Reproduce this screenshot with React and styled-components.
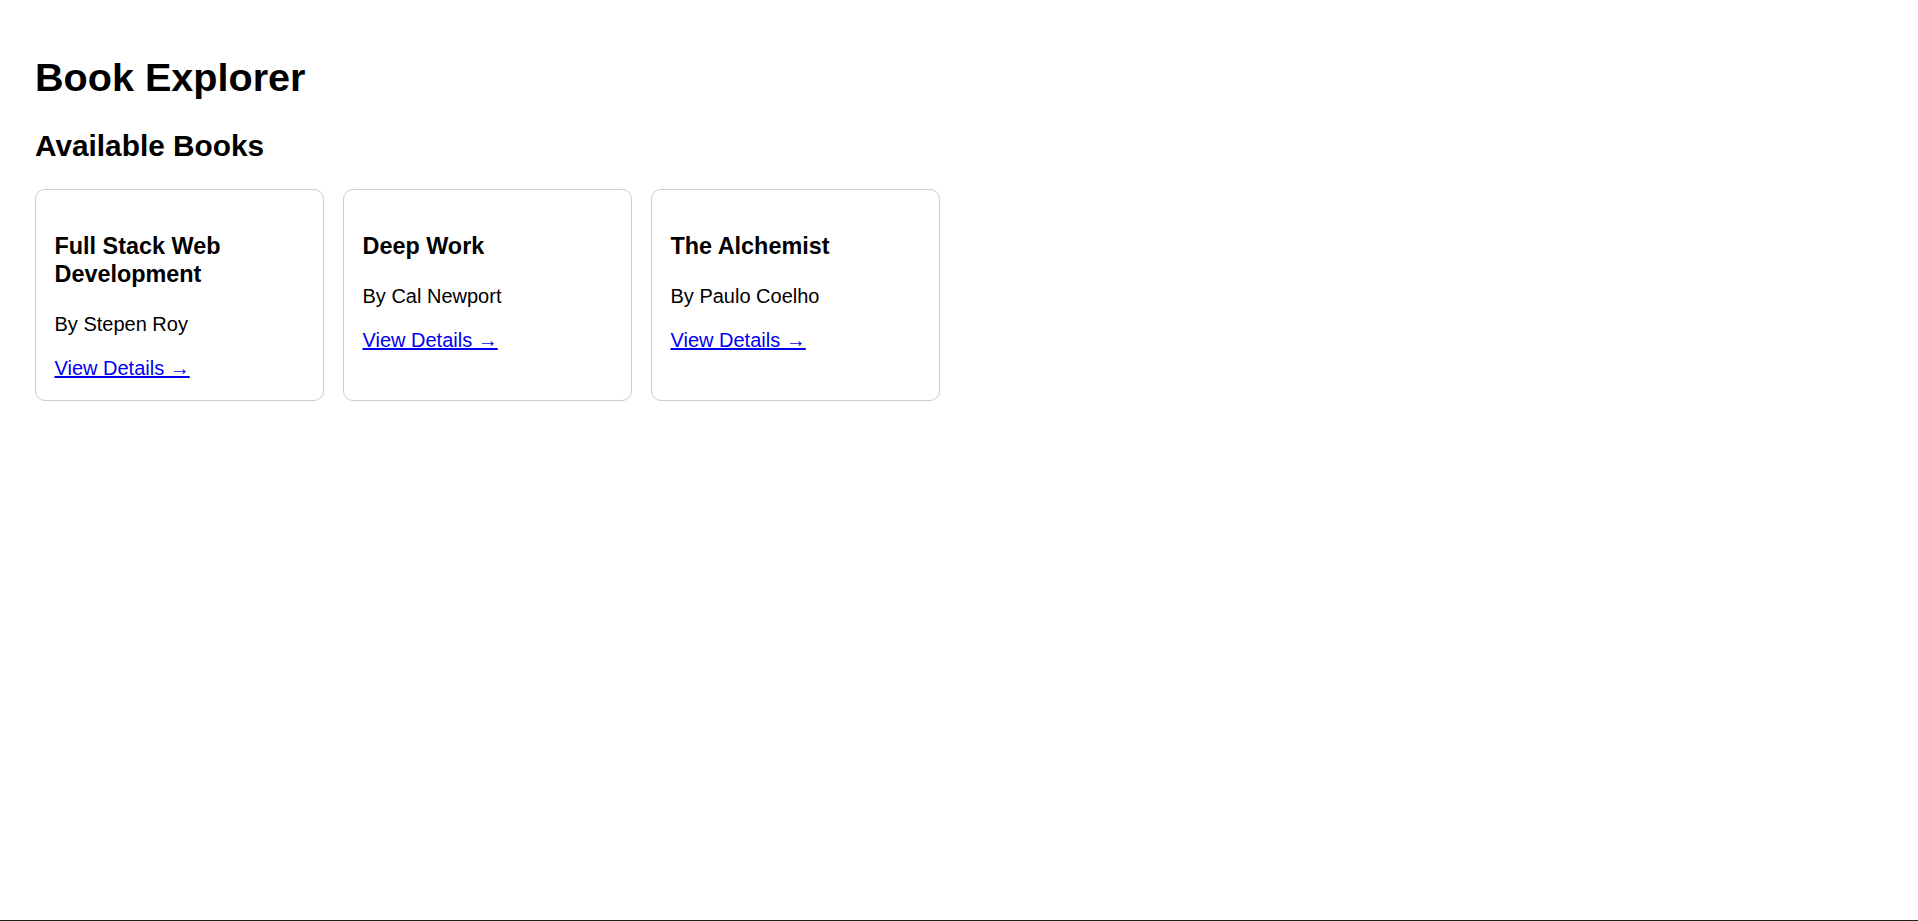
import React from "react";
import styled, { createGlobalStyle } from "styled-components";

const GlobalStyle = createGlobalStyle`
  html, body {
    margin: 0;
    padding: 0;
    background: #ffffff;
  }
  body {
    font-family: "Liberation Sans", Arial, sans-serif;
    color: #000000;
    line-height: 1.2;
  }
`;

const Page = styled.div`
  box-sizing: border-box;
  min-height: 100vh;
  padding: 27px 35px;
  border-bottom: 1px solid #1b2121;
  display: flow-root;
`;

const Title = styled.h1`
  font-size: 39.6px;
  font-weight: bold;
  margin: 27px 0 26px;
`;

const Subtitle = styled.h2`
  font-size: 29.8px;
  font-weight: bold;
  margin: 26px 0 26px;
`;

const CardRow = styled.div`
  display: flex;
  gap: 19px;
  align-items: stretch;
`;

const Card = styled.div`
  box-sizing: border-box;
  width: 289px;
  padding: 18.5px 18.5px 20px;
  border: 1px solid #cccccc;
  border-radius: 10px;
  background: #ffffff;
`;

const BookTitle = styled.h3`
  font-size: 23.4px;
  font-weight: bold;
  margin: 23.4px 0;
`;

const Author = styled.p`
  font-size: 20px;
  margin: 20px 0;
`;

const DetailsLink = styled.a`
  font-size: 20px;
  color: #0000ee;
  text-decoration: underline;
`;

const books = [
  { id: 1, title: "Full Stack Web Development", author: "Stepen Roy" },
  { id: 2, title: "Deep Work", author: "Cal Newport" },
  { id: 3, title: "The Alchemist", author: "Paulo Coelho" },
];

export default function App() {
  return (
    <>
      <GlobalStyle />
      <Page>
        <Title>Book Explorer</Title>
        <Subtitle>Available Books</Subtitle>
        <CardRow>
          {books.map((b) => (
            <Card key={b.id}>
              <BookTitle>{b.title}</BookTitle>
              <Author>By {b.author}</Author>
              <DetailsLink href={`#/books/${b.id}`}>View Details →</DetailsLink>
            </Card>
          ))}
        </CardRow>
      </Page>
    </>
  );
}
